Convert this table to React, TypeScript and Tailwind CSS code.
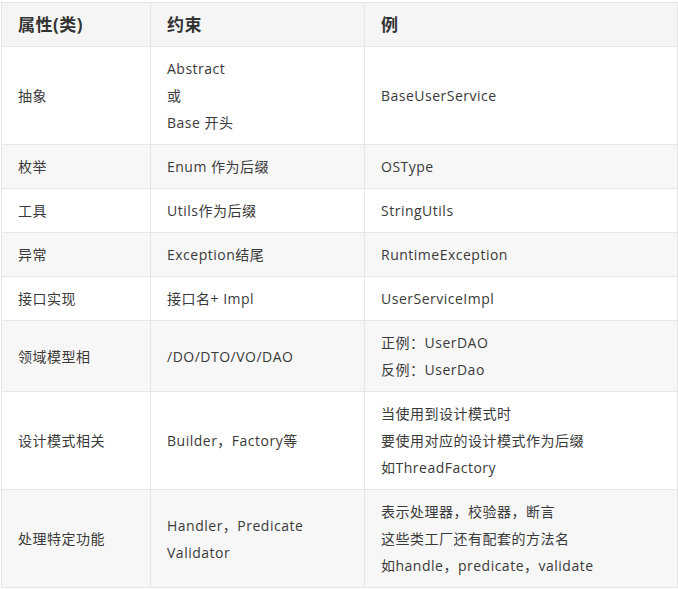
import React from "react";

const rows: [string[], string[], string[]][] = [
  [["抽象"], ["Abstract", "或", "Base 开头"], ["BaseUserService"]],
  [["枚举"], ["Enum 作为后缀"], ["OSType"]],
  [["工具"], ["Utils作为后缀"], ["StringUtils"]],
  [["异常"], ["Exception结尾"], ["RuntimeException"]],
  [["接口实现"], ["接口名+ Impl"], ["UserServiceImpl"]],
  [["领域模型相"], ["/DO/DTO/VO/DAO"], ["正例：UserDAO", "反例：UserDao"]],
  [["设计模式相关"], ["Builder，Factory等"], ["当使用到设计模式时", "要使用对应的设计模式作为后缀", "如ThreadFactory"]],
  [["处理特定功能"], ["Handler，Predicate", "Validator"], ["表示处理器，校验器，断言", "这些类工厂还有配套的方法名", "如handle，predicate，validate"]],
];

function Cell({ lines }: { lines: string[] }) {
  return (
    <td className="border border-[#e6e6e6] px-4 py-[8px] align-middle">
      {lines.map((l, i) => (
        <div key={i}>{l}</div>
      ))}
    </td>
  );
}

export default function App() {
  return (
    <div
      className="bg-white w-[678px] h-[589px] pt-[2px] pl-[1px] text-[#3a3a3a]"
      style={{ fontFamily: '"Open Sans", "Noto Sans CJK SC", sans-serif' }}
    >
      <table className="border-collapse table-fixed w-[676px] text-[14px] leading-[27px] tracking-[0.5px]">
        <colgroup>
          <col className="w-[149px]" />
          <col className="w-[214px]" />
          <col className="w-[313px]" />
        </colgroup>
        <thead>
          <tr className="bg-[#f5f5f5] text-[17px] font-bold text-[#333]">
            <th className="border border-[#e6e6e6] px-4 py-[8px] text-left">属性(类)</th>
            <th className="border border-[#e6e6e6] px-4 py-[8px] text-left">约束</th>
            <th className="border border-[#e6e6e6] px-4 py-[8px] text-left">例</th>
          </tr>
        </thead>
        <tbody>
          {rows.map((r, i) => (
            <tr key={i} className={i % 2 === 1 ? "bg-[#f7f7f7]" : "bg-white"}>
              <Cell lines={r[0]} />
              <Cell lines={r[1]} />
              <Cell lines={r[2]} />
            </tr>
          ))}
        </tbody>
      </table>
    </div>
  );
}
